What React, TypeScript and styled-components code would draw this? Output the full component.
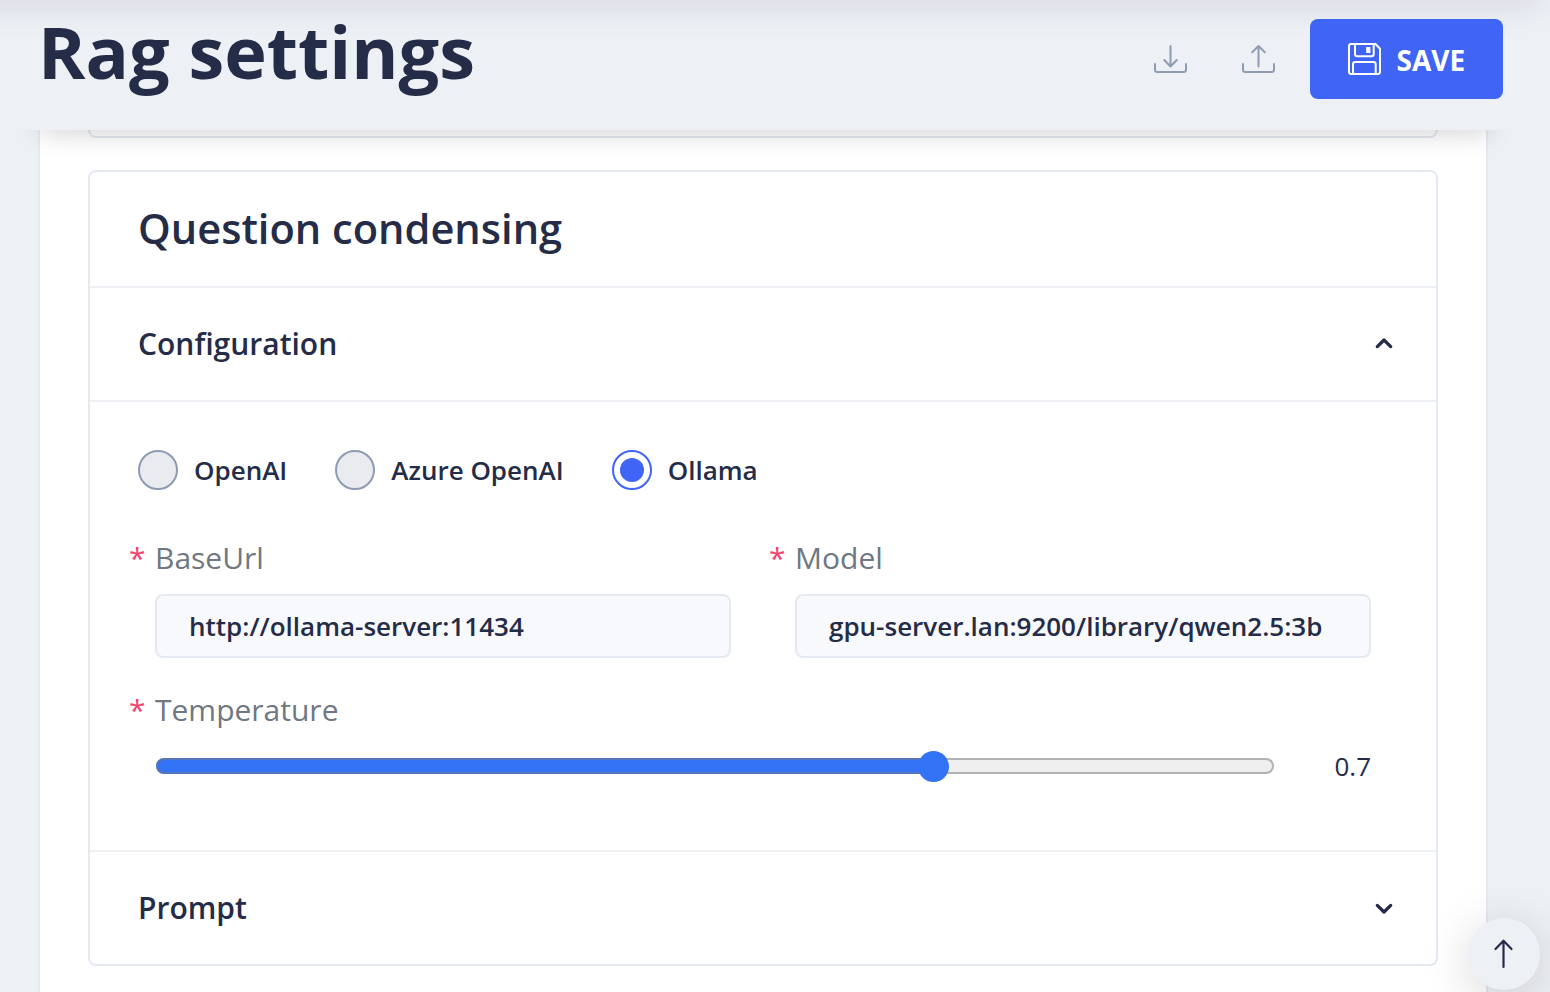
import React from "react";
import styled, { createGlobalStyle } from "styled-components";

const ink = "#252c47";
const page = "#edf0f5";
const line = "#e4e9f2";
const primary = "#4065f6";

const GlobalStyle = createGlobalStyle`
  *, *::before, *::after { box-sizing: border-box; }
  body {
    margin: 0;
    background: ${page};
    color: ${ink};
    font-family: "Open Sans", sans-serif;
    overflow: hidden;
  }
`;

const Page = styled.div`
  position: relative;
  display: flex;
  flex-direction: column;
  height: 992px;
  overflow: hidden;
  background: ${page};
`;

const HeaderShell = styled.div`
  position: relative;
  z-index: 2;
  flex: none;

  &::before {
    content: "";
    position: absolute;
    z-index: -1;
    inset: 20px 60px 0 40px;
    box-shadow: 0 4px 24px rgba(0, 0, 0, 0.17);
  }
`;

const HeaderBar = styled.header`
  position: relative;
  display: flex;
  justify-content: space-between;
  align-items: flex-start;
  height: 130px;
  padding: 0 47px 0 38px;
  background: ${page};
  overflow: hidden;

  &::before {
    content: "";
    position: absolute;
    left: -60px;
    right: 10px;
    top: -60px;
    height: 60px;
    box-shadow: 0 8px 32px rgba(44, 51, 60, 0.1);
  }
`;

const Title = styled.h1`
  position: relative;
  margin: 2px 0 0;
  font-size: 72px;
  line-height: 98px;
  font-weight: 700;
  white-space: nowrap;
`;

const Actions = styled.div`
  position: relative;
  display: flex;
  align-items: center;
  margin-top: 19px;
`;

const IconButton = styled.button`
  display: flex;
  width: 40px;
  height: 40px;
  margin-right: 48px;
  padding: 0;
  border: 0;
  background: none;
  color: #8f9bb3;

  &:nth-of-type(2) { margin-right: 32px; }
`;

const SaveButton = styled.button`
  display: flex;
  align-items: center;
  gap: 15.5px;
  width: 193px;
  height: 80px;
  padding: 0 0 0 38px;
  border: 0;
  border-radius: 8px;
  background: ${primary};
  color: #fff;
  font: 700 28px/40px "Open Sans", sans-serif;
`;

const SaveLabel = styled.span`
  padding-top: 2px;
`;

const Panel = styled.main`
  flex: 1;
  width: 1450px;
  margin-left: 38px;
  padding: 0 48px;
  border: solid ${line};
  border-width: 0 2px;
  background: #fff;
`;

const PreviousCard = styled.section`
  height: 8px;
  border: 2px solid ${line};
  border-top: 0;
  border-radius: 0 0 8px 8px;
`;

const Card = styled.section`
  margin-top: 32px;
  height: 796px;
  border: 2px solid ${line};
  border-radius: 8px;
`;

const CardHeader = styled.h2`
  height: 116px;
  margin: 0;
  padding: 0 48px;
  border-bottom: 2px solid ${page};
  font-size: 41.6px;
  line-height: 113px;
  font-weight: 600;
`;

const AccordionHeader = styled.div<{ $open?: boolean }>`
  display: flex;
  justify-content: space-between;
  align-items: center;
  height: ${(p) => (p.$open ? 114 : 112)}px;
  padding: 0 32px 0 48px;
  border-bottom: ${(p) => (p.$open ? `2px solid ${page}` : "0")};
  font-size: 30px;
  line-height: 40px;
  font-weight: 600;
`;

const AccordionBody = styled.div`
  height: 450px;
  padding: 48px 65px 0 40px;
  border-bottom: 2px solid ${page};
`;

const RadioGroup = styled.div`
  display: flex;
  gap: 48px;
  padding-left: 8px;
`;

const RadioOption = styled.label`
  display: flex;
  align-items: center;
  gap: 16px;
  height: 40px;
  font-size: 26px;
  line-height: 40px;
  font-weight: 600;
  white-space: nowrap;
`;

const RadioMark = styled.span<{ $checked?: boolean }>`
  display: flex;
  align-items: center;
  justify-content: center;
  width: 40px;
  height: 40px;
  border: 2px solid ${(p) => (p.$checked ? primary : "#8f9bb3")};
  border-radius: 50%;
  background: ${(p) => (p.$checked ? "#fff" : "#e9ebef")};

  &::after {
    content: "";
    width: 24px;
    height: 24px;
    border-radius: 50%;
    background: ${(p) => (p.$checked ? primary : "transparent")};
  }
`;

const FieldRow = styled.div`
  display: grid;
  grid-template-columns: 601px 601px;
  column-gap: 39px;
  margin-top: 48px;
`;

const FieldLabel = styled.label`
  display: flex;
  height: 40px;
  margin-left: -1px;
  color: #6f7782;
  font-size: 30px;
  line-height: 40px;

  &::before {
    content: "*";
    width: 26px;
    color: #f4436f;
  }
`;

const TextInput = styled.input`
  display: block;
  width: 576px;
  height: 64px;
  margin: 16px 0 0 25px;
  padding: 0 32px;
  border: 2px solid ${line};
  border-radius: 8px;
  outline: 0;
  background: #f7f9fc;
  color: ${ink};
  font: 600 26px/40px "Open Sans", sans-serif;
`;

const TemperatureField = styled.div`
  margin-top: 32px;
`;

const SliderRow = styled.div`
  display: flex;
  align-items: center;
  justify-content: space-between;
  height: 40px;
  margin-top: 16px;
  padding-left: 26px;
  font-size: 26px;
`;

const Track = styled.div`
  position: relative;
  width: 1118px;
  height: 16px;
  border: 2px solid #b2b2b2;
  border-radius: 8px;
  background: #efefef;
`;

const TrackFill = styled.div`
  position: absolute;
  inset: -2px auto -2px -2px;
  border: 2px solid #5575b8;
  border-radius: 8px 0 0 8px;
  background: #3273f6;
`;

const Thumb = styled.div`
  position: absolute;
  top: -9.5px;
  width: 31px;
  height: 31px;
  margin-left: -15.5px;
  border-radius: 50%;
  background: #3273f6;
`;

const ScrollTop = styled.button`
  position: absolute;
  z-index: 3;
  left: 1468px;
  top: 918px;
  display: flex;
  align-items: center;
  justify-content: center;
  width: 72px;
  height: 72px;
  padding: 0;
  border: 0;
  border-radius: 50%;
  background: ${page};
  color: ${ink};
  box-shadow: 0 8px 48px rgba(0, 0, 0, 0.16);
`;

const DownloadIcon = () => (
  <svg width="40" height="40" viewBox="0 0 40 40" fill="none" stroke="currentColor" strokeWidth="2" strokeLinecap="round" strokeLinejoin="round">
    <path d="M20.5 7v20.5M14.2 21l6.3 6.5 6.3-6.5M5 25v5.500q0 2.500 2.500 2.500h26q2.500 0 2.500-2.500V25" />
  </svg>
);

const UploadIcon = () => (
  <svg width="40" height="40" viewBox="0 0 40 40" fill="none" stroke="currentColor" strokeWidth="2" strokeLinecap="round" strokeLinejoin="round">
    <path d="M20.5 27.5V7M14.2 13.3L20.5 7l6.3 6.3M5 25v5.500q0 2.500 2.500 2.500h26q2.500 0 2.500-2.500V25" />
  </svg>
);

const SaveIcon = () => (
  <svg width="33" height="32" viewBox="0 0 33 32" fill="none" stroke="#fff" strokeWidth="2" strokeLinejoin="round">
    <path d="M3.200 1h24.300L32 5.800v23q0 2.200-2.200 2.200H3.200Q1 31 1 28.800V3.200Q1 1 3.200 1z" />
    <path d="M7 1v10q0 2.200 2.200 2.200h14.300q2.200 0 2.200-2.200V1" />
    <path d="M5 31V21.200Q5 19 7.200 19h18.300q2.200 0 2.200 2.200V31" />
    <path d="M18.200 4h4.200v6h-4.200z" fill="#fff" stroke="none" />
  </svg>
);

const Chevron = ({ up }: { up?: boolean }) => (
  <svg width="40" height="40" viewBox="0 0 40 40" fill="none" stroke="currentColor" strokeWidth="3.300" strokeLinecap="round" strokeLinejoin="round">
    <path d={up ? "M13.300 22.600L20 16l6.700 6.600" : "M13.300 17.400L20 24l6.700-6.600"} />
  </svg>
);

const ArrowUp = () => (
  <svg width="40" height="40" viewBox="0 0 40 40" fill="none" stroke="currentColor" strokeWidth="2.200" strokeLinecap="round" strokeLinejoin="round">
    <path d="M19.500 33V7M11.500 15l8-8.300 8 8.300" />
  </svg>
);

const providers = ["OpenAI", "Azure OpenAI", "Ollama"];
const temperature = 0.7;

export default function App() {
  return (
    <Page>
      <GlobalStyle />
      <HeaderShell>
        <HeaderBar>
          <Title>Rag settings</Title>
          <Actions>
            <IconButton aria-label="Import"><DownloadIcon /></IconButton>
            <IconButton aria-label="Export"><UploadIcon /></IconButton>
            <SaveButton><SaveIcon /><SaveLabel>SAVE</SaveLabel></SaveButton>
          </Actions>
        </HeaderBar>
      </HeaderShell>
      <Panel>
        <PreviousCard />
        <Card>
          <CardHeader>Question condensing</CardHeader>
          <AccordionHeader $open>Configuration<Chevron up /></AccordionHeader>
          <AccordionBody>
            <RadioGroup>
              {providers.map((name) => (
                <RadioOption key={name}>
                  <RadioMark $checked={name === "Ollama"} />
                  {name}
                </RadioOption>
              ))}
            </RadioGroup>
            <FieldRow>
              <div>
                <FieldLabel>BaseUrl</FieldLabel>
                <TextInput defaultValue="http://ollama-server:11434" />
              </div>
              <div>
                <FieldLabel>Model</FieldLabel>
                <TextInput defaultValue="gpu-server.lan:9200/library/qwen2.5:3b" />
              </div>
            </FieldRow>
            <TemperatureField>
              <FieldLabel>Temperature</FieldLabel>
              <SliderRow>
                <Track>
                  <TrackFill style={{ width: 1086 * temperature + 16 }} />
                  <Thumb style={{ left: 1086 * temperature + 15 }} />
                </Track>
                <span>{temperature}</span>
              </SliderRow>
            </TemperatureField>
          </AccordionBody>
          <AccordionHeader>Prompt<Chevron /></AccordionHeader>
        </Card>
      </Panel>
      <ScrollTop aria-label="Back to top"><ArrowUp /></ScrollTop>
    </Page>
  );
}
